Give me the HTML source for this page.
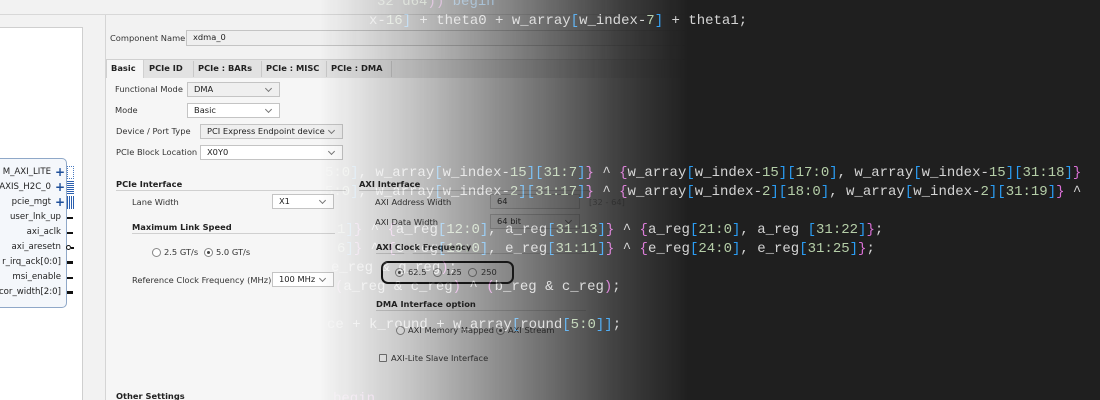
<!DOCTYPE html>
<html><head><meta charset="utf-8"><style>
*{margin:0;padding:0;box-sizing:border-box}
html,body{width:1100px;height:400px;overflow:hidden}
body{background:#1f1f1f;position:relative;font-family:"DejaVu Sans","Liberation Sans",sans-serif}
.code{position:absolute;font-family:"Liberation Mono","DejaVu Sans Mono",monospace;font-size:14px;line-height:19px;color:#d4d4d4;white-space:pre;height:19px}
.b{color:#2a9df4}.p{color:#da70d6}.n{color:#b5cea8}.k{color:#569cd6}
#ui{position:absolute;left:0;top:0;width:1100px;height:400px;background:#f2f2f2;
-webkit-mask-image:linear-gradient(to right,#000 0,#000 320px,rgba(0,0,0,.75) 420px,rgba(0,0,0,.45) 520px,rgba(0,0,0,.15) 620px,transparent 690px);
mask-image:linear-gradient(to right,#000 0,#000 320px,rgba(0,0,0,.75) 420px,rgba(0,0,0,.45) 520px,rgba(0,0,0,.15) 620px,transparent 690px)}
.a{position:absolute;font-size:8.3px;color:#333;white-space:nowrap;line-height:11px}
.bd{font-weight:bold;color:#222}
.sel{position:absolute;height:15px;border:1px solid #c4c4c4;background:#fff;font-size:8.3px;line-height:13px;padding-left:6px;color:#222;white-space:nowrap;overflow:hidden}
.sel.g{background:#efefef}
.sel:after{content:"";position:absolute;right:8px;top:3px;width:4px;height:4px;border-right:1px solid #777;border-bottom:1px solid #777;transform:rotate(45deg)}
.sel.ni:after{display:none}
.hr{position:absolute;height:1px;background:#d0d0d0}
.r{position:absolute;width:9px;height:9px;border:1px solid #888;border-radius:50%;background:#fff}
.r.on:after{content:"";position:absolute;left:2px;top:2px;width:3px;height:3px;border-radius:50%;background:#444}
.port{position:absolute;font-size:8.6px;color:#222;white-space:nowrap;line-height:11px;text-align:right}
</style></head><body>
<div class="code" style="left:377px;top:-7px;opacity:.8"><span class="n">32'd64</span><span class="p">))</span> <span class="k">begin</span></div>
<div class="code" style="left:369px;top:12px">x-<span class="n">16</span><span class="b">]</span> + theta0 + w_array<span class="b">[</span>w_index-<span class="n">7</span><span class="b">]</span> + theta1;</div>
<div class="code" style="left:325px;top:164px"><span class="n">5:0</span><span class="b">]</span>, w_array<span class="b">[</span>w_index-<span class="n">15</span><span class="b">][</span><span class="n">31:7</span><span class="b">]</span><span class="p">}</span> ^ <span class="p">{</span>w_array<span class="b">[</span>w_index-<span class="n">15</span><span class="b">][</span><span class="n">17:0</span><span class="b">]</span>, w_array<span class="b">[</span>w_index-<span class="n">15</span><span class="b">][</span><span class="n">31:18</span><span class="b">]</span><span class="p">}</span></div>
<div class="code" style="left:325px;top:183px"><span class="n">5:0</span><span class="b">]</span>, w_array<span class="b">[</span>w_index-<span class="n">2</span><span class="b">][</span><span class="n">31:17</span><span class="b">]</span><span class="p">}</span> ^ <span class="p">{</span>w_array<span class="b">[</span>w_index-<span class="n">2</span><span class="b">][</span><span class="n">18:0</span><span class="b">]</span>, w_array<span class="b">[</span>w_index-<span class="n">2</span><span class="b">][</span><span class="n">31:19</span><span class="b">]</span><span class="p">}</span> ^</div>
<div class="code" style="left:337px;top:221px"><span class="n">1</span><span class="b">]</span><span class="p">}</span> ^ <span class="p">{</span>a_reg<span class="b">[</span><span class="n">12:0</span><span class="b">]</span>, a_reg<span class="b">[</span><span class="n">31:13</span><span class="b">]</span><span class="p">}</span> ^ <span class="p">{</span>a_reg<span class="b">[</span><span class="n">21:0</span><span class="b">]</span>, a_reg <span class="b">[</span><span class="n">31:22</span><span class="b">]</span><span class="p">}</span>;</div>
<div class="code" style="left:337px;top:240px"><span class="n">6</span><span class="b">]</span><span class="p">}</span> ^ <span class="p">{</span>e_reg<span class="b">[</span><span class="n">10:0</span><span class="b">]</span>, e_reg<span class="b">[</span><span class="n">31:11</span><span class="b">]</span><span class="p">}</span> ^ <span class="p">{</span>e_reg<span class="b">[</span><span class="n">24:0</span><span class="b">]</span>, e_reg<span class="b">[</span><span class="n">31:25</span><span class="b">]</span><span class="p">}</span>;</div>
<div class="code" style="left:331px;top:259px">e_reg &amp; g_reg<span class="p">)</span>;</div>
<div class="code" style="left:335px;top:278px"><span class="p">(</span>a_reg &amp; c_reg<span class="p">)</span> ^ <span class="p">(</span>b_reg &amp; c_reg<span class="p">)</span>;</div>
<div class="code" style="left:327px;top:316px">ce + k_round + w_array<span class="b">[</span>round<span class="b">[</span><span class="n">5:0</span><span class="b">]]</span>;</div>
<div class="code" style="left:333px;top:390px"><span class="p">begin</span></div>

<div id="ui">
 <div style="position:absolute;left:0;top:14px;width:1100px;height:1px;background:#d8d8d8"></div>
 <div style="position:absolute;left:-2px;top:27px;width:85px;height:380px;background:#fff;border:1px solid #cfcfcf"></div>
 <div style="position:absolute;left:-6px;top:158px;width:73px;height:150px;background:#f4f7fb;border:1px solid #8fa8c8;border-radius:5px"></div>
  <div class="port" style="right:1049px;top:167px">M_AXI_LITE</div>
  <div class="port" style="right:1049px;top:182px">AXIS_H2C_0</div>
  <div class="port" style="right:1049px;top:197px">pcie_mgt</div>
  <div class="port" style="right:1039px;top:212px">user_lnk_up</div>
  <div class="port" style="right:1039px;top:227px">axi_aclk</div>
  <div class="port" style="right:1039px;top:242px">axi_aresetn</div>
  <div class="port" style="right:1039px;top:257px">r_irq_ack[0:0]</div>
  <div class="port" style="right:1039px;top:272px">msi_enable</div>
  <div class="port" style="right:1039px;top:287px">cor_width[2:0]</div>
 <div style="position:absolute;left:55px;top:165px;color:#1e4f9a;font-size:12px;font-weight:bold;line-height:15px">+<br>+<br>+</div>
 <div style="position:absolute;left:67px;top:166px;width:7px;height:13px;border:1px dotted #4a7ac0"></div>
 <div style="position:absolute;left:67px;top:181px;width:7px;height:13px;background:repeating-linear-gradient(#2b5fae 0 1px,transparent 1px 2px)"></div>
 <div style="position:absolute;left:67px;top:196px;width:7px;height:13px;background:repeating-linear-gradient(90deg,#2b5fae 0 1px,transparent 1px 2px)"></div>
 <div style="position:absolute;left:67px;top:217px;width:6px;height:2px;background:#111"></div>
 <div style="position:absolute;left:67px;top:232px;width:6px;height:2px;background:#111"></div>
 <div style="position:absolute;left:66px;top:245px;width:5px;height:5px;border:1.5px solid #111;border-radius:50%"></div>
 <div style="position:absolute;left:71px;top:247px;width:3px;height:1.5px;background:#111"></div>
 <div style="position:absolute;left:67px;top:261px;width:6px;height:3px;background:#111"></div>
 <div style="position:absolute;left:67px;top:277px;width:6px;height:2px;background:#111"></div>
 <div style="position:absolute;left:67px;top:291px;width:6px;height:3px;background:#111"></div>
 <div style="position:absolute;left:105px;top:15px;width:1px;height:385px;background:#d5d5d5"></div>

 <div class="a" style="left:110px;top:33px">Component Name</div>
 <div class="sel g ni" style="left:186px;top:30px;width:600px;height:16px">xdma_0</div>
 <div style="position:absolute;left:106px;top:59px;width:700px;height:19px;background:#e2e2e2;border-top:1px solid #d0d0d0"></div>
 <div style="position:absolute;left:106px;top:59px;width:38px;height:20px;background:#f6f6f6;border:1px solid #d0d0d0;border-bottom:none"></div>
 <div style="position:absolute;left:106px;top:78px;width:700px;height:322px;background:#f6f6f6"></div>
 <div class="a bd" style="left:111px;top:63px">Basic</div>
 <div class="a bd" style="left:149px;top:63px">PCIe ID</div>
 <div class="a bd" style="left:198px;top:63px">PCIe : BARs</div>
 <div class="a bd" style="left:266px;top:63px">PCIe : MISC</div>
 <div class="a bd" style="left:331px;top:63px">PCIe : DMA</div>
 <div style="position:absolute;left:193px;top:61px;width:1px;height:16px;background:#c8c8c8"></div>
 <div style="position:absolute;left:261px;top:61px;width:1px;height:16px;background:#c8c8c8"></div>
 <div style="position:absolute;left:326px;top:61px;width:1px;height:16px;background:#c8c8c8"></div>
 <div style="position:absolute;left:391px;top:61px;width:1px;height:16px;background:#c8c8c8"></div>

 <div class="a" style="left:115px;top:84px">Functional Mode</div>
 <div class="sel g" style="left:187px;top:82px;width:93px">DMA</div>
 <div class="a" style="left:115px;top:105px">Mode</div>
 <div class="sel" style="left:187px;top:103px;width:93px">Basic</div>
 <div class="a" style="left:116px;top:126px">Device / Port Type</div>
 <div class="sel g" style="left:200px;top:124px;width:143px">PCI Express Endpoint device</div>
 <div class="a" style="left:116px;top:147px">PCIe Block Location</div>
 <div class="sel" style="left:200px;top:145px;width:143px">X0Y0</div>

 <div class="a bd" style="left:116px;top:179px">PCIe Interface</div>
 <div class="hr" style="left:116px;top:190px;width:230px"></div>
 <div class="a" style="left:132px;top:197px">Lane Width</div>
 <div class="sel" style="left:272px;top:194px;width:62px">X1</div>
 <div class="a bd" style="left:132px;top:222px">Maximum Link Speed</div>
 <div class="hr" style="left:132px;top:233px;width:203px"></div>
 <div class="r" style="left:152px;top:248px"></div><div class="a" style="left:164px;top:247px">2.5 GT/s</div>
 <div class="r on" style="left:204px;top:248px"></div><div class="a" style="left:216px;top:247px">5.0 GT/s</div>
 <div class="a" style="left:132px;top:275px">Reference Clock Frequency (MHz)</div>
 <div class="sel" style="left:272px;top:272px;width:62px">100 MHz</div>
 <div class="a bd" style="left:116px;top:391px">Other Settings</div>

 <div class="a bd" style="left:359px;top:179px">AXI Interface</div>
 <div class="hr" style="left:359px;top:190px;width:230px"></div>
 <div class="a" style="left:375px;top:197px">AXI Address Width</div>
 <div class="sel g ni" style="left:490px;top:194px;width:90px">64</div>
 <div class="a" style="left:589px;top:197px;color:#888">[32 - 64]</div>
 <div class="a" style="left:375px;top:217px">AXI Data Width</div>
 <div class="sel g" style="left:490px;top:214px;width:90px">64 bit</div>
 <div class="a bd" style="left:376px;top:242px">AXI Clock Frequency</div>
 <div class="hr" style="left:376px;top:253px;width:210px"></div>
 <div style="position:absolute;left:381px;top:261px;width:133px;height:23px;border:2px solid #111;border-radius:7px"></div>
 <div class="r on" style="left:395px;top:268px"></div><div class="a" style="left:408px;top:267px">62.5</div>
 <div class="r" style="left:433px;top:268px"></div><div class="a" style="left:446px;top:267px">125</div>
 <div class="r" style="left:468px;top:268px"></div><div class="a" style="left:481px;top:267px">250</div>
 <div class="a bd" style="left:376px;top:299px">DMA Interface option</div>
 <div class="hr" style="left:376px;top:310px;width:210px"></div>
 <div class="r" style="left:396px;top:326px"></div><div class="a" style="left:408px;top:325px">AXI Memory Mapped</div>
 <div class="r on" style="left:496px;top:326px"></div><div class="a" style="left:508px;top:325px">AXI Stream</div>
 <div style="position:absolute;left:379px;top:354px;width:8px;height:8px;border:1px solid #777;background:#fff;border-radius:1px"></div>
 <div class="a" style="left:391px;top:353px">AXI-Lite Slave Interface</div>
</div>
</body></html>
